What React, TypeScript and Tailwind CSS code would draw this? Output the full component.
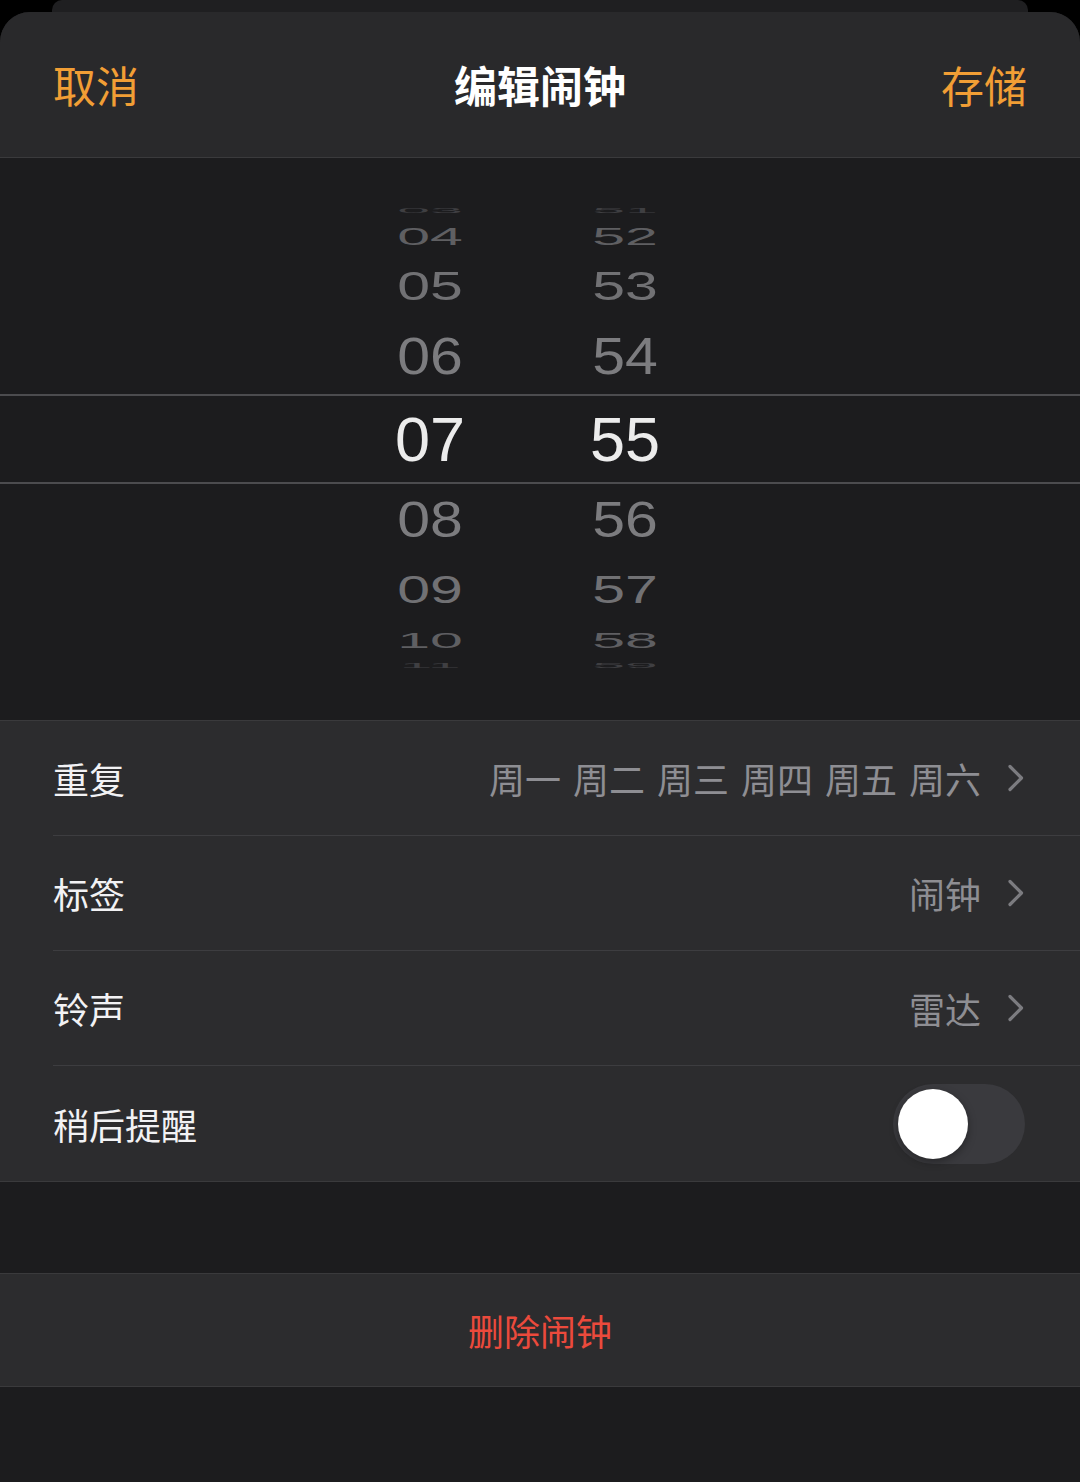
import React from 'react';

type PickerRow = {
  hour: string;
  minute: string;
  height: number;
  scale: number;
  color: string;
  selected?: boolean;
};

const pickerRows: PickerRow[] = [
  { hour: '03', minute: '51', height: 20, scale: 0.12, color: 'text-[#3f3f42]' },
  { hour: '04', minute: '52', height: 32, scale: 0.42, color: 'text-[#5f5f62]' },
  { hour: '05', minute: '53', height: 68, scale: 0.68, color: 'text-[#717174]' },
  { hour: '06', minute: '54', height: 74, scale: 0.87, color: 'text-[#7c7c7f]' },
  { hour: '07', minute: '55', height: 90, scale: 1, color: 'text-[#ececec]', selected: true },
  { hour: '08', minute: '56', height: 72, scale: 0.84, color: 'text-[#7c7c7f]' },
  { hour: '09', minute: '57', height: 68, scale: 0.66, color: 'text-[#717174]' },
  { hour: '10', minute: '58', height: 32, scale: 0.38, color: 'text-[#5f5f62]' },
  { hour: '11', minute: '59', height: 18, scale: 0.12, color: 'text-[#3f3f42]' },
];

const cjk = "font-['Noto_Sans_CJK_SC','Noto_Sans',sans-serif]";

const Chevron: React.FC = () => (
  <svg width="18" height="28" viewBox="0 0 18 28" fill="none" className="shrink-0">
    <path d="M3 2.5 L14.5 14 L3 25.5" stroke="#7c7c80" strokeWidth="3.2" strokeLinecap="round" strokeLinejoin="round" />
  </svg>
);

const TimePicker: React.FC = () => (
  <div className="flex h-[562px] flex-col bg-[#1c1c1e] pt-[42px]">
    {pickerRows.map((row) => (
      <div
        key={row.hour}
        className={`flex items-center pl-[365px] ${row.selected ? 'border-y-2 border-[#4c4c4f]' : ''}`}
        style={{ height: row.height }}
      >
        {[row.hour, row.minute].map((v, i) => (
          <div
            key={i}
            className={`flex w-[130px] justify-center font-['Liberation_Sans',Arial,sans-serif] ${row.color} ${i === 1 ? 'ml-[65px]' : ''} ${row.selected ? 'text-[63px]' : 'text-[59px]'} leading-none`}
            style={{ transform: `scaleY(${row.scale})` }}
          >
            {v}
          </div>
        ))}
      </div>
    ))}
  </div>
);

const SettingRow: React.FC<{ label: string; value?: React.ReactNode; last?: boolean; children?: React.ReactNode }> = ({ label, value, last, children }) => (
  <div className="flex h-[115px] items-center pl-[53px]">
    <div className={`flex h-full flex-1 items-center pr-[55px] ${last ? '' : 'border-b border-[#3d3d40]'}`}>
      <span className={`${cjk} text-[36px] text-[#f2f2f4]`}>{label}</span>
      <div className="ml-auto flex items-center">
        {value && (
          <>
            <div className={`${cjk} flex gap-[12px] text-[36px] text-[#8e8e93]`}>{value}</div>
            <div className="ml-[26px]"><Chevron /></div>
          </>
        )}
        {children}
      </div>
    </div>
  </div>
);

const Toggle: React.FC = () => (
  <div className="flex h-[80px] w-[132px] items-center rounded-full bg-[#3a3a3e] pl-[5px]">
    <div className="h-[70px] w-[70px] rounded-full bg-white shadow-[0_3px_8px_rgba(0,0,0,0.35)]" />
  </div>
);

export default function App() {
  const days = ['周一', '周二', '周三', '周四', '周五', '周六'];
  return (
    <div className="flex min-h-[1482px] w-[1080px] flex-col bg-black">
      <div className="mx-[52px] h-[12px] rounded-t-[10px] bg-[#1f1f21]" />
      <div className="flex flex-1 flex-col overflow-hidden rounded-t-[30px] bg-[#1c1c1e]">
        <header className="flex h-[146px] items-center border-b border-[#3a3a3c] bg-[#29292b] px-[53px]">
          <span className={`${cjk} w-[200px] text-[43px] text-[#f19e35]`}>取消</span>
          <span className={`${cjk} flex-1 text-center text-[43px] font-bold text-white`}>编辑闹钟</span>
          <span className={`${cjk} w-[200px] text-right text-[43px] text-[#f19e35]`}>存储</span>
        </header>
        <TimePicker />
        <section className="border-y border-[#3a3a3c] bg-[#2c2c2e]">
          <SettingRow label="重复" value={days.map((d) => <span key={d}>{d}</span>)} />
          <SettingRow label="标签" value={<span>闹钟</span>} />
          <SettingRow label="铃声" value={<span>雷达</span>} />
          <SettingRow label="稍后提醒" last>
            <Toggle />
          </SettingRow>
        </section>
        <div className="h-[91px]" />
        <button className="flex h-[114px] items-center justify-center border-y border-[#3a3a3c] bg-[#2c2c2e]">
          <span className={`${cjk} text-[36px] text-[#eb4a3c]`}>删除闹钟</span>
        </button>
        <div className="flex-1" />
      </div>
    </div>
  );
}
